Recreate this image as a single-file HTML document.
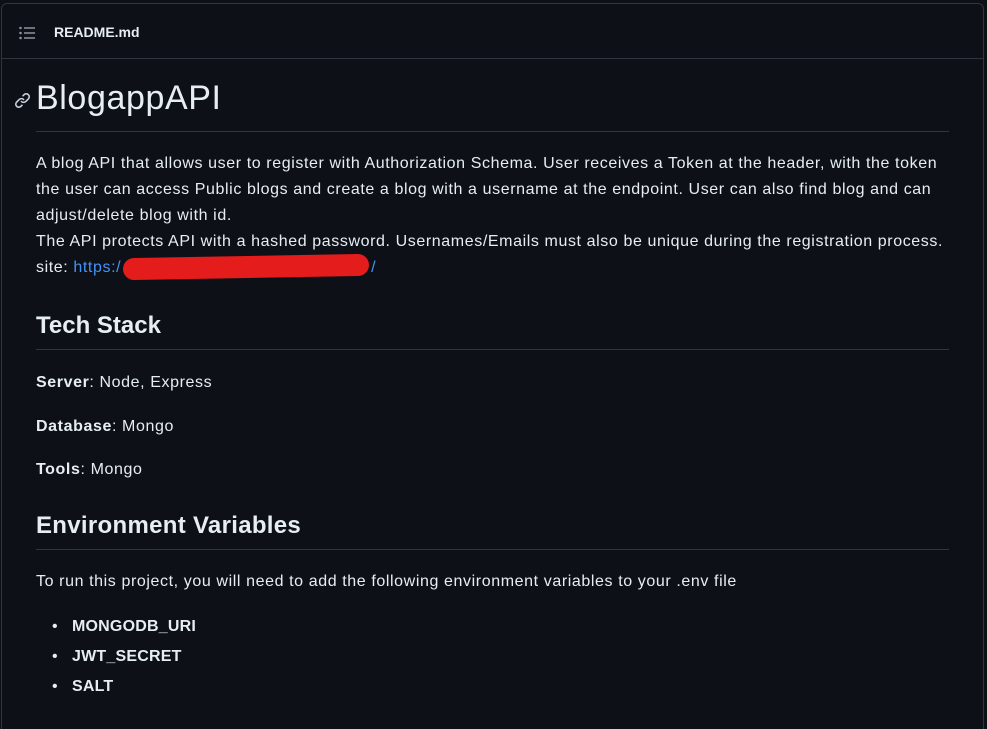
<!DOCTYPE html>
<html><head><meta charset="utf-8"><style>
html,body{margin:0;background:#0d1117;width:987px;height:729px;overflow:hidden}
body{position:relative;font-family:"Liberation Sans",sans-serif;color:#e6edf3}
.card{position:absolute;left:1px;top:3px;width:981px;height:726px;border:1px solid #30363d;border-bottom:none;border-radius:6px 6px 0 0;background:#0d1117}
.hd{height:54px;border-bottom:1px solid #30363d;position:relative}
.hd .t{position:absolute;left:52px;top:20px;font-size:14px;font-weight:bold;color:#e6edf3}
.ab{position:absolute;white-space:nowrap}
.tx{font-size:16px;line-height:26px;letter-spacing:0.6px}
.hr{position:absolute;left:36px;width:913px;height:1px;background:#30363d}
</style></head><body>
<div class="card"><div class="hd">
<svg style="position:absolute;left:17px;top:22px" width="18" height="14" viewBox="0 0 18 14" fill="none" stroke="#8b949e" stroke-width="1.4"><circle cx="1.5" cy="2" r=".6" fill="#8b949e"/><circle cx="1.5" cy="7" r=".6" fill="#8b949e"/><circle cx="1.5" cy="12" r=".6" fill="#8b949e"/><path d="M5 2h11M5 7h11M5 12h11"/></svg>
<div class="t">README.md</div></div></div>
<svg class="ab" style="left:14px;top:92px" width="17" height="17" viewBox="0 0 16 16" fill="none" stroke="#c9d1d9" stroke-width="1.5" stroke-linecap="round"><path d="M7 9a3 3 0 0 0 4 0l2.5-2.5a2.8 2.8 0 0 0-4-4L8.5 3.5"/><path d="M9 7a3 3 0 0 0-4 0L2.5 9.5a2.8 2.8 0 0 0 4 4l1-1"/></svg>
<div class="ab" style="left:36px;top:79px;font-size:34px;letter-spacing:0.6px;color:#e6edf3">BlogappAPI</div>
<div class="hr" style="top:131px"></div>
<div class="ab tx" style="left:36px;top:151px">A blog API that allows user to register with Authorization Schema. User receives a Token at the header, with the token<br>the user can access Public blogs and create a blog with a username at the endpoint. User can also find blog and can<br>adjust/delete blog with id.<br>The API protects API with a hashed password. Usernames/Emails must also be unique during the registration process.<br>site: <span style="color:#4493f8">https:/<span style="display:inline-block;width:246px;height:22px;vertical-align:-6px;background:#e41c1c;border-radius:12px;margin:0 2px;transform:rotate(-1deg)"></span>/</span></div>
<div class="ab" style="left:36px;top:312px;font-size:24px;font-weight:bold">Tech Stack</div>
<div class="hr" style="top:349px"></div>
<div class="ab tx" style="left:36px;top:370px"><b>Server</b>: Node, Express</div>
<div class="ab tx" style="left:36px;top:414px"><b>Database</b>: Mongo</div>
<div class="ab tx" style="left:36px;top:457px"><b>Tools</b>: Mongo</div>
<div class="ab" style="left:36px;top:512px;font-size:24px;font-weight:bold;letter-spacing:0.3px">Environment Variables</div>
<div class="hr" style="top:549px"></div>
<div class="ab tx" style="left:36px;top:569px">To run this project, you will need to add the following environment variables to your .env file</div>
<div class="ab" style="left:52px;top:612px;font-size:16px;line-height:30px">•</div>
<div class="ab" style="left:52px;top:642px;font-size:16px;line-height:30px">•</div>
<div class="ab" style="left:52px;top:672px;font-size:16px;line-height:30px">•</div>
<div class="ab" style="left:72px;top:612px;font-size:16px;line-height:30px;font-weight:bold;letter-spacing:0.2px">MONGODB_URI<br>JWT_SECRET<br>SALT</div>
</body></html>
